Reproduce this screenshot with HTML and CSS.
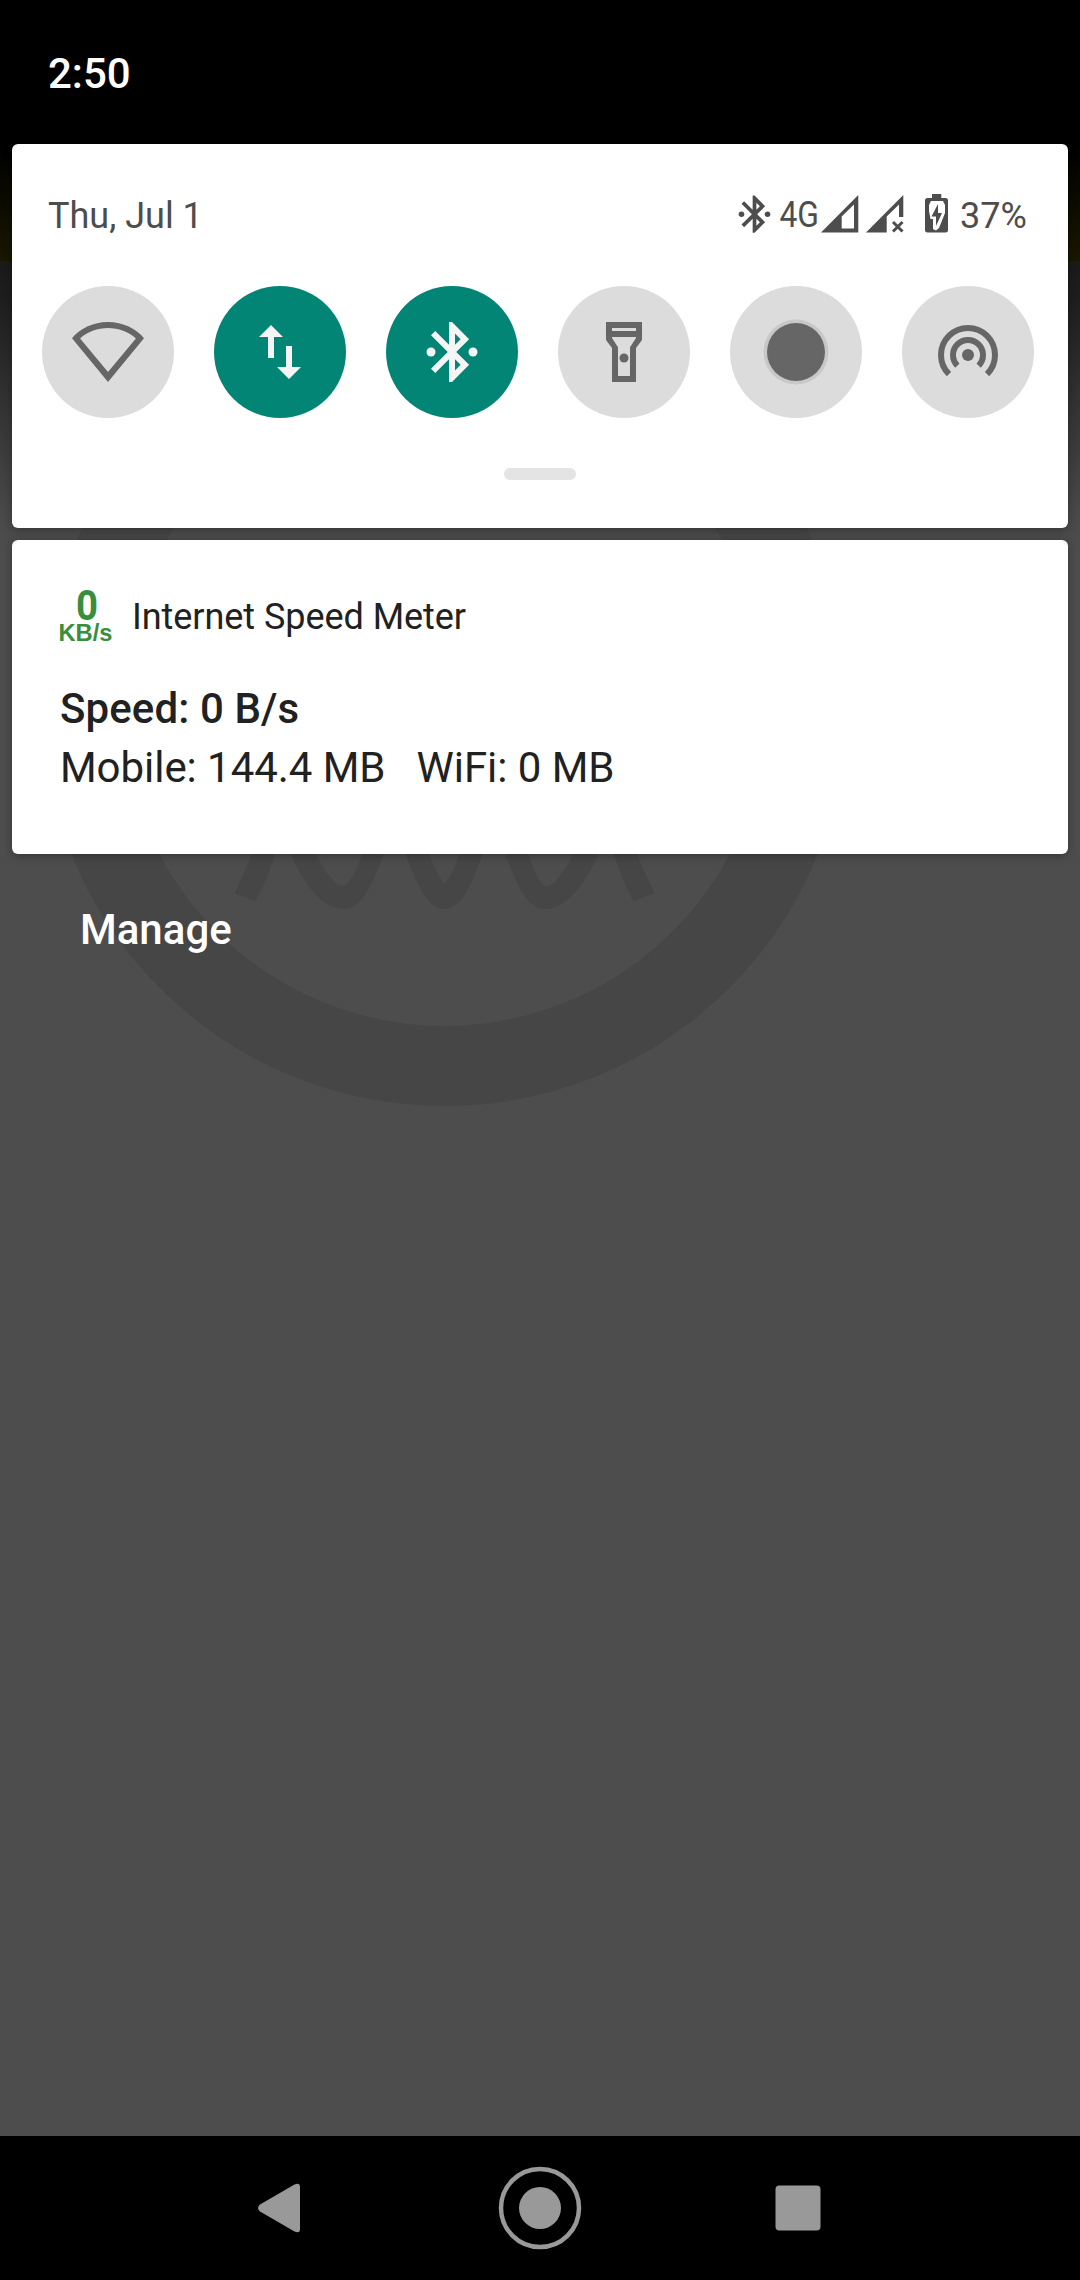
FILE: index.html
```html
<!DOCTYPE html>
<html lang="en">
<head>
  <meta charset="UTF-8" />
  <meta name="viewport" content="width=device-width, initial-scale=1.0"/>
  <title>Notifications</title>
  <link rel="stylesheet" href="styles.css">
</head>
<body>

<div class="screen">
  <!-- Dimmed wallpaper logo -->
  <svg class="wallpaper" width="1080" height="1200" viewBox="0 0 1080 1200">
    <circle cx="444.5" cy="703.5" r="362.5" fill="none" stroke="#464646" stroke-width="80"/>
    <g fill="#464646">
      <path d="M254 848 Q246 870 234.500 893 L255.500 901.500 Q268 878 277 848Z"/>
      <path d="M635 848 Q643 870 654.500 893 L633.500 901.500 Q621 878 612 848Z"/>
      <path d="M288 848 C303 884 322 909 344 909 C362 909 373 884 386 848 H365 C357 869 350 886 342 886 C334 886 323 869 313 848Z"/>
      <path d="M403 848 C418 887 428 909 444.500 909 C461 909 471 887 485 848 H462 Q453 874 444.500 884 Q436 874 427 848Z"/>
      <path d="M601 848 C586 884 567 909 545 909 C527 909 516 884 503 848 H526 C534 869 539 886 547 886 C555 886 566 869 576 848Z"/>
    </g>
  </svg>

  <header class="status-bar">2:50</header>

  <!-- Quick settings -->
  <section class="card quick-settings">
    <div class="info-row">
      <span class="date">Thu, Jul 1</span>
      <svg class="status-icons" width="220" height="48" viewBox="732 190 220 48">
        <g fill="#4d4d4d">
          <g transform="translate(732.2 191.900) scale(1.86)">
            <path d="M17.71 7.71L12 2h-1v7.590L6.410 5 5 6.410 10.590 12 5 17.590 6.410 19 11 14.410V22h1l5.710-5.710-4.300-4.290 4.300-4.290zM13 5.830l1.880 1.880L13 9.590V5.830zm1.880 10.460L13 18.170v-3.760l1.880 1.880z"/>
            <circle cx="5" cy="12" r="1.500"/>
            <circle cx="19" cy="12" r="1.500"/>
          </g>
          <text class="network" x="779.500" y="227" textLength="39.500" lengthAdjust="spacingAndGlyphs">4G</text>
          <path fill-rule="evenodd" d="M821 232.500 858.300 195V232.500ZM841.700 216.500V228.500H854V204.500Z"/>
          <path d="M866 232.500 903.300 195V217H899V204.500L886.700 216.500V232.500Z"/>
          <path d="M893 222 902.500 231.500M902.500 222 893 231.500" stroke="#4d4d4d" stroke-width="3"/>
          <path fill-rule="evenodd" d="M932 194H941.300V198H945.500Q948 198 948 200.500V230Q948 232.500 945.500 232.500H927.500Q925 232.500 925 230V200.500Q925 198 927.500 198H932ZM931 201 929 205V211L930.500 219H933V229L936 230.500L939 228L945 213V205L943 201Z"/>
          <path d="M938 204 931.500 216.500H936V226L942 213H938Z"/>
        </g>
      </svg>
      <span class="battery">37%</span>
    </div>

    <div class="tiles">
      <div class="tile">
        <svg viewBox="0 0 24 24"><path fill-rule="evenodd" d="M12 22 24 7.400C21.500 4.300 17 2 12 2S2.500 4.300 0 7.400ZM12 18.700 2.700 7.500C5.100 5.200 8.500 4 12 4S18.900 5.200 21.300 7.500Z"/></svg>
      </div>
      <div class="tile on">
        <svg viewBox="0 0 24 24"><path d="M9 3 5 7h3v7h2V7h3zM16 17v-7h-2v7h-3l4 4 4-4z"/></svg>
      </div>
      <div class="tile on">
        <svg viewBox="0 0 24 24">
          <path d="M17.710 7.710L12 2h-1v7.590L6.410 5 5 6.410 10.590 12 5 17.590 6.410 19 11 14.410V22h1l5.710-5.710-4.300-4.290 4.300-4.290zM13 5.830l1.880 1.880L13 9.590V5.830zm1.880 10.460L13 18.170v-3.760l1.880 1.880z"/>
          <circle cx="5" cy="12" r="1.500"/>
          <circle cx="19" cy="12" r="1.500"/>
        </svg>
      </div>
      <div class="tile">
        <svg viewBox="0 0 24 24">
          <path fill-rule="evenodd" d="M6 2H18V8L16 10.700V22H8V10.700L6 8ZM8 4V5H16V4ZM8 7V7.300L10 10.400V20H14V10.400L16 7.300V7Z"/>
          <circle cx="12" cy="14" r="1.500"/>
        </svg>
      </div>
      <div class="tile">
        <svg viewBox="0 0 72 72">
          <circle cx="36" cy="36" r="32.500" fill="#c8c8c8"/>
          <circle cx="36" cy="36" r="29"/>
        </svg>
      </div>
      <div class="tile">
        <svg viewBox="0 0 24 24">
          <circle cx="12" cy="13" r="2"/>
          <path class="line" d="M8.460 16.540A5 5 0 1 1 15.540 16.540M5.640 19.360A9 9 0 1 1 18.360 19.360"/>
        </svg>
      </div>
    </div>

    <div class="handle"></div>
  </section>

  <!-- Notification -->
  <section class="card notification">
    <div class="app-row">
      <svg class="app-icon" width="56" height="60" viewBox="0 0 56 60">
        <text x="18" y="33.500" class="icon-value" textLength="22" lengthAdjust="spacingAndGlyphs">0</text>
        <text x="0.500" y="55" class="icon-unit" textLength="54" lengthAdjust="spacingAndGlyphs">KB/s</text>
      </svg>
      <span class="app-name">Internet Speed Meter</span>
    </div>
    <div class="speed">Speed: 0 B/s</div>
    <div class="usage">Mobile: 144.4 MB   WiFi: 0 MB</div>
  </section>

  <div class="manage">Manage</div>

  <nav class="nav-bar">
    <svg width="1080" height="144" viewBox="0 0 1080 144" fill="#999">
      <path d="M260 68.500 294.500 48.500Q300 46 300 51V93Q300 98 294.500 95.500L260 75.500Q256 72 260 68.500Z"/>
      <circle cx="540" cy="72" r="39" fill="none" stroke="#999" stroke-width="4.5"/>
      <circle cx="540" cy="72" r="21"/>
      <rect x="775.500" y="49.500" width="45" height="45" rx="4"/>
    </svg>
  </nav>
</div>

</body>
</html>
```
FILE: styles.css
```css
* {
  box-sizing: border-box;
}

body {
  margin: 0;
  font-family: Roboto, sans-serif;
  background: #4d4d4d;
}

.screen {
  position: relative;
  display: flex;
  flex-direction: column;
  width: 1080px;
  height: 2280px;
  overflow: hidden;
  background:
    linear-gradient(#000 0, #000 144px, #191700 261px, transparent 261px),
    linear-gradient(#1a1a1a 261px, #1e1e1e 300px, #383838 430px, #4a4a4a 520px, #4d4d4d 560px);
}

.wallpaper {
  position: absolute;
  top: 0;
  left: 0;
}

.status-bar {
  height: 144px;
  padding: 49px 48px 0;
  color: #fff;
  font-size: 42px;
  font-weight: 500;
  line-height: 50px;
}

.card {
  position: relative;
  margin: 0 12px 12px;
  background: #fff;
  border-radius: 6px;
  box-shadow: 0 2px 10px rgba(0,0,0,0.3);
}

.quick-settings {
  height: 384px;
  padding: 46px 0 0;
}

.info-row {
  display: flex;
  height: 48px;
  padding: 0 42px 0 36px;
  color: #4d4d4d;
  font-size: 36px;
  line-height: 52px;
}

.status-icons {
  margin-left: auto;
}

.network {
  font-size: 37px;
}

.battery {
  width: 66px;
  margin-left: 8px;
}

.tiles {
  display: flex;
  gap: 40px;
  margin-top: 48px;
  padding: 0 30px;
}

.tile {
  display: flex;
  align-items: center;
  justify-content: center;
  width: 132px;
  height: 132px;
  border-radius: 50%;
  background: #dcdcdc;
  fill: #666;
}

.tile.on {
  background: #038576;
  fill: #f5f5f5;
}

.tile svg {
  width: 72px;
  height: 72px;
}

.line {
  fill: none;
  stroke: #666;
  stroke-width: 2;
}

.handle {
  width: 72px;
  height: 12px;
  margin: 50px auto 0;
  border-radius: 6px;
  background: #e4e4e4;
}

.notification {
  height: 314px;
  padding: 46px 48px 0;
  color: #212121;
}

.app-row {
  display: flex;
  height: 60px;
}

.app-icon {
  margin-left: -2px;
  overflow: visible;
  fill: #388e3c;
  font-weight: 700;
}

.icon-value {
  font-size: 43px;
}

.icon-unit {
  font-family: "Liberation Sans", sans-serif;
  font-size: 24px;
}

.app-name {
  margin-left: 18px;
  font-size: 36px;
  line-height: 63px;
  letter-spacing: -0.05px;
}

.speed {
  margin-top: 33px;
  font-size: 42px;
  font-weight: 500;
  line-height: 59px;
  letter-spacing: 0.1px;
}

.usage {
  font-size: 42px;
  line-height: 59px;
  letter-spacing: -0.05px;
  white-space: pre;
}

.manage {
  position: relative;
  margin-top: 39px;
  padding-left: 80px;
  color: #fff;
  font-size: 42px;
  font-weight: 500;
  line-height: 50px;
}

.nav-bar {
  position: relative;
  height: 144px;
  margin-top: auto;
  background: #000;
}
```
